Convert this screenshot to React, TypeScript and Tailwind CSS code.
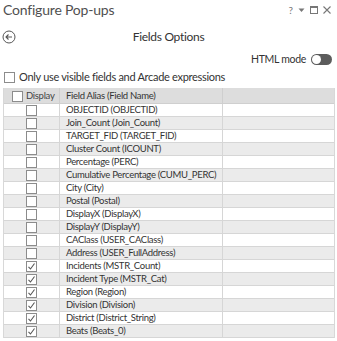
import React from 'react';

const rows: { label: string; checked: boolean }[] = [
  { label: 'OBJECTID (OBJECTID)', checked: false },
  { label: 'Join_Count (Join_Count)', checked: false },
  { label: 'TARGET_FID (TARGET_FID)', checked: false },
  { label: 'Cluster Count (ICOUNT)', checked: false },
  { label: 'Percentage (PERC)', checked: false },
  { label: 'Cumulative Percentage (CUMU_PERC)', checked: false },
  { label: 'City (City)', checked: false },
  { label: 'Postal (Postal)', checked: false },
  { label: 'DisplayX (DisplayX)', checked: false },
  { label: 'DisplayY (DisplayY)', checked: false },
  { label: 'CAClass (USER_CAClass)', checked: false },
  { label: 'Address (USER_FullAddress)', checked: false },
  { label: 'Incidents (MSTR_Count)', checked: true },
  { label: 'Incident Type (MSTR_Cat)', checked: true },
  { label: 'Region (Region)', checked: true },
  { label: 'Division (Division)', checked: true },
  { label: 'District (District_String)', checked: true },
  { label: 'Beats (Beats_0)', checked: true },
];

const Check: React.FC<{ checked?: boolean }> = ({ checked }) => (
  <span className="w-[11px] h-[11px] shrink-0 border border-[#8c8c8c] bg-white flex items-center justify-center">
    {checked && (
      <svg width="9" height="9" viewBox="0 0 9 9">
        <path d="M1.5 4.8 L3.5 7 L7.5 1.5" fill="none" stroke="#555" strokeWidth="1.1" />
      </svg>
    )}
  </span>
);

const App: React.FC = () => {
  return (
    <div className="w-[337px] h-[341px] overflow-hidden bg-white text-[#333] font-['Lato',sans-serif]">
      {/* title bar */}
      <div className="h-[20px] flex items-center justify-between pl-[3px] pr-[6px]">
        <span className="text-[14px] tracking-[-0.2px] leading-[20px] text-[#505050]">Configure Pop-ups</span>
        <div className="flex items-center gap-[5px] text-[#777]">
          <span className="text-[10px] leading-none">?</span>
          <svg width="7" height="6" viewBox="0 0 7 6"><path d="M0.5 1.5 L6.5 1.5 L3.5 5z" fill="#777" /></svg>
          <svg width="8" height="8" viewBox="0 0 8 8"><rect x="0.5" y="0.5" width="7" height="7" fill="none" stroke="#777" /><rect x="0.5" y="0.5" width="7" height="1.5" fill="#777" /></svg>
          <svg width="8" height="8" viewBox="0 0 8 8"><path d="M0.5 0.5 L7.5 7.5 M7.5 0.5 L0.5 7.5" stroke="#777" strokeWidth="1.1" /></svg>
        </div>
      </div>

      {/* header row */}
      <div className="mt-[7px] h-[20px] relative flex items-center justify-center">
        <svg className="absolute left-[2px] top-[3px]" width="14" height="14" viewBox="0 0 14 14">
          <circle cx="7" cy="7" r="6" fill="none" stroke="#555" strokeWidth="1" />
          <path d="M10 7 L4 7 M6.5 4.5 L4 7 L6.5 9.5" fill="none" stroke="#555" strokeWidth="1.1" />
        </svg>
        <span className="text-[12px] tracking-[-0.3px] leading-[20px] text-[#333]">Fields Options</span>
      </div>

      {/* html mode */}
      <div className="mt-[5px] h-[14px] flex items-center justify-end gap-[5px] pr-[5px]">
        <span className="text-[10.5px] tracking-[-0.3px] leading-[14px] text-[#333]">HTML mode</span>
        <span className="w-[21px] h-[11px] rounded-full bg-[#5c5c5c] flex items-center pl-[1px]">
          <span className="w-[9px] h-[9px] rounded-full bg-white" />
        </span>
      </div>

      {/* only visible */}
      <div className="mt-[4px] h-[14px] flex items-center gap-[4px] pl-[4px]">
        <Check />
        <span className="text-[11px] tracking-[-0.3px] leading-[14px] text-[#333]">Only use visible fields and Arcade expressions</span>
      </div>

      {/* table */}
      <div className="mt-[4px] ml-[3px] w-[332px] border-l border-r border-[#d8d8d8]">
        <div className="h-[16px] bg-[#dddddd] grid grid-cols-[56px_163px_1fr] border-b border-[#cfcfcf]">
          <div className="flex items-center gap-[3px] pl-[8px] border-r border-[#cfcfcf]">
            <Check />
            <span className="text-[9.5px] tracking-[-0.3px] leading-[16px] text-[#444]">Display</span>
          </div>
          <div className="flex items-center pl-[6px] border-r border-[#cfcfcf]">
            <span className="text-[9.5px] tracking-[-0.3px] leading-[16px] text-[#333]">Field Alias (Field Name)</span>
          </div>
          <div />
        </div>
        {rows.map((r, i) => (
          <div
            key={i}
            className={`h-[13px] grid grid-cols-[56px_163px_1fr] border-b border-[#d6d6d6] ${i % 2 === 0 ? 'bg-white' : 'bg-[#ebebeb]'}`}
          >
            <div className="flex items-center justify-center border-r border-[#d6d6d6]">
              <Check checked={r.checked} />
            </div>
            <div className="flex items-center pl-[6px] border-r border-[#d6d6d6] overflow-hidden whitespace-nowrap">
              <span className="text-[9.5px] tracking-[-0.3px] leading-[12px] text-[#333]">{r.label}</span>
            </div>
            <div />
          </div>
        ))}
      </div>
    </div>
  );
};

export default App;
